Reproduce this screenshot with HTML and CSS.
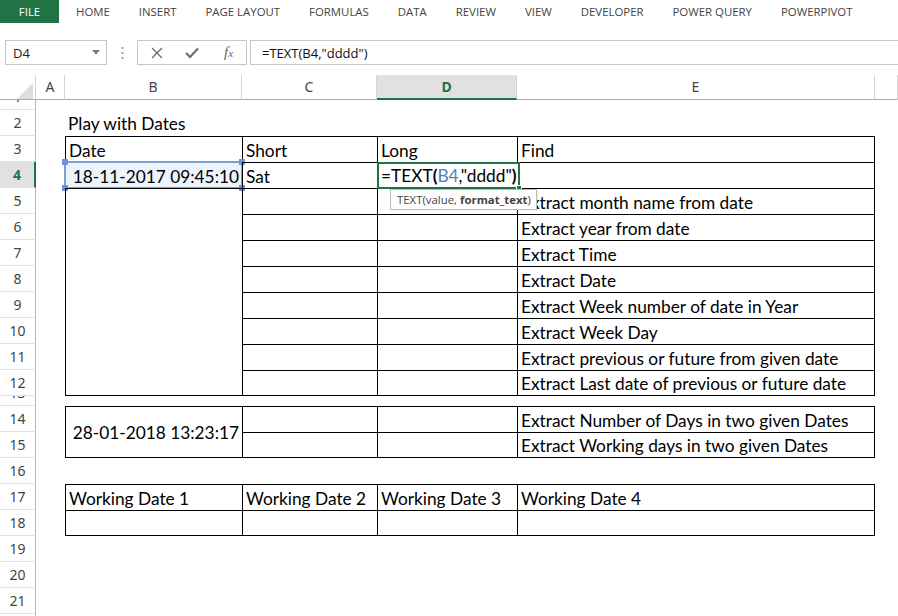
FILE: index.html
```html
<!DOCTYPE html>
<html>
<head>
<meta charset="utf-8">
<link rel="stylesheet" href="styles.css">
</head>
<body>
<nav class="tabs">
  <span class="tab file">FILE</span>
  <span class="tab">HOME</span>
  <span class="tab">INSERT</span>
  <span class="tab">PAGE LAYOUT</span>
  <span class="tab">FORMULAS</span>
  <span class="tab">DATA</span>
  <span class="tab">REVIEW</span>
  <span class="tab">VIEW</span>
  <span class="tab">DEVELOPER</span>
  <span class="tab">POWER QUERY</span>
  <span class="tab">POWERPIVOT</span>
</nav>
<div class="fbar">
  <div class="namebox"><span>D4</span><svg width="8" height="5" viewBox="0 0 8 5"><polygon points="0,0 8,0 4,4.5" fill="#7a7a7a"/></svg></div>
  <div class="grip"><svg width="3" height="14" viewBox="0 0 3 14"><rect x="0.5" y="1" width="2" height="2" fill="#a0a0a0"/><rect x="0.5" y="6" width="2" height="2" fill="#a0a0a0"/><rect x="0.5" y="11" width="2" height="2" fill="#a0a0a0"/></svg></div>
  <div class="fbtns">
    <svg class="ico-x" width="12" height="12" viewBox="0 0 12 12"><path d="M1 1 L11 11 M11 1 L1 11" stroke="#6e6e6e" stroke-width="1.4" fill="none"/></svg>
    <svg class="ico-ok" width="14" height="12" viewBox="0 0 14 12"><path d="M1 6 L5 10 L13 1.5" stroke="#6e6e6e" stroke-width="2.2" fill="none"/></svg>
    <span class="fx">f<span class="fxx">x</span></span>
  </div>
  <div class="finput">=TEXT(B4,"dddd")</div>
</div>
<table class="sheet">
  <colgroup>
    <col class="w-rh"><col class="w-a"><col class="w-b"><col class="w-c"><col class="w-d"><col class="w-e"><col class="w-f">
  </colgroup>
  <tr class="hdr">
    <th class="corner"><svg width="36" height="24" viewBox="0 0 36 24"><polygon points="17,24 33,24 33,8" fill="#dedede"/></svg></th>
    <th class="ch">A</th><th class="ch">B</th><th class="ch">C</th><th class="ch sel">D</th><th class="ch">E</th><th class="ch"></th>
  </tr>
  <tr class="tiny">
    <th class="rh"><div class="clip"><span>1</span></div></th><td></td><td></td><td></td><td></td><td></td><td></td>
  </tr>
  <tr>
    <th class="rh">2</th><td></td><td>Play with Dates</td><td></td><td></td><td></td><td></td>
  </tr>
  <tr>
    <th class="rh">3</th><td></td><td class="c">Date</td><td class="c">Short</td><td class="c">Long</td><td class="c last">Find</td><td></td>
  </tr>
  <tr>
    <th class="rh sel">4</th><td></td>
    <td class="c num ref">18-11-2017 09:45:10<div class="refbox"><i class="h tl"></i><i class="h tr"></i><i class="h bl"></i><i class="h br"></i></div></td>
    <td class="c">Sat</td>
    <td class="c edit"><div class="editbox">=TEXT<b>(</b><span class="refc">B4</span>,"dddd"<b>)</b><i class="fill"></i></div><div class="tip">TEXT(value, <b>format_text</b>)</div></td>
    <td class="c last"></td><td></td>
  </tr>
  <tr>
    <th class="rh">5</th><td></td><td class="c end" rowspan="8"></td><td class="c"></td><td class="c"></td><td class="c last">Extract month name from date</td><td></td>
  </tr>
  <tr>
    <th class="rh">6</th><td></td><td class="c"></td><td class="c"></td><td class="c last">Extract year from date</td><td></td>
  </tr>
  <tr>
    <th class="rh">7</th><td></td><td class="c"></td><td class="c"></td><td class="c last">Extract Time</td><td></td>
  </tr>
  <tr>
    <th class="rh">8</th><td></td><td class="c"></td><td class="c"></td><td class="c last">Extract Date</td><td></td>
  </tr>
  <tr>
    <th class="rh">9</th><td></td><td class="c"></td><td class="c"></td><td class="c last">Extract Week number of date in Year</td><td></td>
  </tr>
  <tr>
    <th class="rh">10</th><td></td><td class="c"></td><td class="c"></td><td class="c last">Extract Week Day</td><td></td>
  </tr>
  <tr>
    <th class="rh">11</th><td></td><td class="c"></td><td class="c"></td><td class="c last">Extract previous or future from given date</td><td></td>
  </tr>
  <tr>
    <th class="rh">12</th><td></td><td class="c end"></td><td class="c end"></td><td class="c last end">Extract Last date of previous or future date</td><td></td>
  </tr>
  <tr class="tiny">
    <th class="rh"><div class="clip"><span>13</span></div></th><td></td><td></td><td></td><td></td><td></td><td></td>
  </tr>
  <tr>
    <th class="rh">14</th><td></td><td class="c end num" rowspan="2">28-01-2018 13:23:17</td><td class="c"></td><td class="c"></td><td class="c last">Extract Number of Days in two given Dates</td><td></td>
  </tr>
  <tr>
    <th class="rh">15</th><td></td><td class="c end"></td><td class="c end"></td><td class="c last end">Extract Working days in two given Dates</td><td></td>
  </tr>
  <tr>
    <th class="rh">16</th><td></td><td></td><td></td><td></td><td></td><td></td>
  </tr>
  <tr>
    <th class="rh">17</th><td></td><td class="c">Working Date 1</td><td class="c">Working Date 2</td><td class="c">Working Date 3</td><td class="c last">Working Date 4</td><td></td>
  </tr>
  <tr>
    <th class="rh">18</th><td></td><td class="c end"></td><td class="c end"></td><td class="c end"></td><td class="c last end"></td><td></td>
  </tr>
  <tr>
    <th class="rh">19</th><td></td><td></td><td></td><td></td><td></td><td></td>
  </tr>
  <tr>
    <th class="rh">20</th><td></td><td></td><td></td><td></td><td></td><td></td>
  </tr>
  <tr>
    <th class="rh">21</th><td></td><td></td><td></td><td></td><td></td><td></td>
  </tr>
  <tr>
    <th class="rh">22</th><td></td><td></td><td></td><td></td><td></td><td></td>
  </tr>
</table>
</body>
</html>
```

FILE: styles.css
```css
* { box-sizing: border-box; }
html, body { margin: 0; padding: 0; }
body {
  width: 898px;
  height: 616px;
  overflow: hidden;
  background: #fff;
  font-family: "Open Sans", "Noto Sans", sans-serif;
}

/* Ribbon tabs */
.tabs {
  display: flex;
  align-items: center;
  height: 23px;
  font-size: 11.4px;
  color: #444;
}
.tab { padding: 0 14.5px; white-space: nowrap; }
.tab.file {
  width: 59px;
  height: 23px;
  padding: 0;
  margin-right: 2.5px;
  display: flex;
  align-items: center;
  justify-content: center;
  background: #217346;
  color: #fff;
}

/* Formula bar */
.fbar {
  display: flex;
  height: 25px;
  margin-top: 17px;
}
.namebox {
  margin-left: 5px;
  width: 102px;
  border: 1px solid #c6c6c6;
  display: flex;
  align-items: center;
  justify-content: space-between;
  padding: 0 6px 0 7px;
  font-size: 13px;
  color: #222;
}
.grip {
  width: 30px;
  display: flex;
  align-items: center;
  justify-content: center;
}
.fbtns {
  width: 110px;
  border: 1px solid #c6c6c6;
  display: flex;
  align-items: center;
  padding-left: 13px;
}
.ico-x { margin-right: 22px; }
.ico-ok { margin-right: 25px; }
.fx {
  font-family: "Liberation Serif", serif;
  font-style: italic;
  font-size: 15px;
  color: #666;
}
.fxx { font-size: 11px; }
.finput {
  flex: 1;
  margin-left: 3px;
  border: 1px solid #c6c6c6;
  border-right: none;
  padding-left: 11px;
  display: flex;
  align-items: center;
  font-size: 13px;
  color: #111;
}

/* Sheet */
.sheet {
  margin-top: 10px;
  border-collapse: separate;
  border-spacing: 0;
  table-layout: fixed;
  width: 898px;
  font-family: Lato, "Open Sans", sans-serif;
  font-size: 17.3px;
  color: #000;
}
.w-rh { width: 36px; }
.w-a { width: 29px; }
.w-b { width: 177px; }
.w-c { width: 135px; }
.w-d { width: 140px; }
.w-e { width: 358px; }
.w-f { width: 23px; }

.sheet tr { height: 26px; }
.sheet tr.hdr { height: 25px; }
.sheet tr.tiny { height: 10px; }

.sheet th {
  padding: 0;
  font-family: "Noto Sans", "Open Sans", sans-serif;
  font-weight: normal;
  font-size: 14px;
  color: #444;
}
.corner {
  border-right: 1px solid #d4d4d4;
  border-bottom: 1px solid #ababab;
  vertical-align: bottom;
  line-height: 0;
}
.corner svg { display: block; }
.ch {
  border-right: 1px solid #d4d4d4;
  border-bottom: 1px solid #ababab;
  text-align: center;
  line-height: 20px;
}
.ch.sel {
  background: #e1e1e1;
  color: #217346;
  font-weight: bold;
  border-bottom: 2px solid #217346;
}
.rh {
  border-right: 1px solid #b5b5b5;
  border-bottom: 1px solid #e1e1e1;
  text-align: center;
  line-height: 20px;
}
.rh.sel {
  background: #e1e1e1;
  color: #217346;
  font-weight: bold;
  border-right: 2px solid #217346;
}
.clip {
  height: 9px;
  overflow: hidden;
  line-height: 26px;
}
.clip span { display: block; margin-top: -16px; }

.sheet td {
  padding: 1px 3px 0 3px;
  white-space: nowrap;
  overflow: visible;
  line-height: 21px;
  vertical-align: middle;
  position: relative;
}
.sheet td.c {
  border-top: 1px solid #000;
  border-left: 1px solid #000;
}
.sheet td.last { border-right: 1px solid #000; }
.sheet td.end { border-bottom: 1px solid #000; }
.sheet td.num { text-align: right; }

/* B4 reference highlight */
.sheet td.ref { background: #edf3fb; }
.refbox {
  position: absolute;
  left: -2px;
  top: -2px;
  right: -1px;
  bottom: -1px;
  border: 2px solid #7c9fd8;
  pointer-events: none;
}
.h {
  position: absolute;
  width: 6px;
  height: 6px;
  background: #6f92d2;
}
.h.tl { left: -4px; top: -4px; }
.h.tr { right: -4px; top: -4px; }
.h.bl { left: -4px; bottom: -4px; }
.h.br { right: -4px; bottom: -4px; }

/* D4 edit box */
.editbox {
  position: absolute;
  left: -1px;
  top: -1px;
  min-width: 143px;
  height: 27px;
  border: 2px solid #217346;
  background: #fff;
  padding: 1px 1px 0 2px;
  line-height: 21px;
  z-index: 2;
  white-space: nowrap;
}
.editbox b { font-weight: bold; }
.refc { color: #4f81c7; }
.fill {
  position: absolute;
  right: -4px;
  bottom: -4px;
  width: 6px;
  height: 6px;
  background: #217346;
  border: 1px solid #fff;
}
.tip {
  position: absolute;
  left: 12px;
  top: 26px;
  height: 21px;
  padding: 0 5px 0 6px;
  border: 1px solid #bcbcbc;
  background: #fff;
  font-family: "Open Sans", sans-serif;
  font-size: 11.4px;
  line-height: 19px;
  color: #444;
  z-index: 3;
  box-shadow: 1px 1px 2px rgba(0,0,0,0.08);
}
.tip b { font-weight: bold; color: #444; }
```
